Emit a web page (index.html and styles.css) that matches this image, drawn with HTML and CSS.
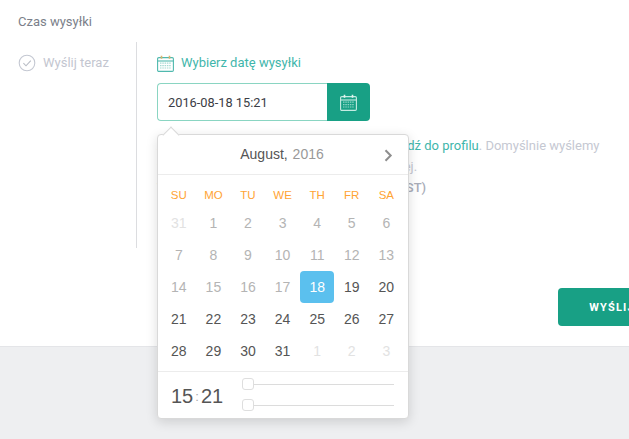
FILE: index.html
```html
<!DOCTYPE html>
<html lang="pl">
<head>
<meta charset="utf-8">
<title>Czas wysyłki</title>
<link rel="stylesheet" href="styles.css">
</head>
<body>
<main class="panel">
  <h2 class="title">Czas wysyłki</h2>
  <div class="columns">
    <div class="now">
      <svg class="check" width="18" height="18" viewBox="0 0 18 18" fill="none"><circle cx="9" cy="9" r="7.8" stroke="#c4c8d2" stroke-width="1.1"/><path d="M5.4 9.2l2.6 2.6 4.8-5.2" stroke="#b9bdc6" stroke-width="1.1"/></svg>
      <span>Wyślij teraz</span>
    </div>
    <div class="schedule">
      <div class="pick">
        <svg class="cal" width="17" height="17" viewBox="0 0 17 17" fill="none"><rect x="0.6" y="2.6" width="15.8" height="13.8" rx="1.2" stroke="#4fb9ae" stroke-width="1.1"/><path d="M0.6 6h15.8" stroke="#4fb9ae" stroke-width="1.1"/><path d="M4.5 .8v3M12.5 .8v3" stroke="#d9b36c" stroke-width="1.6"/><path d="M3 8.2h11M3 10.6h11M3 13h11" stroke="#a5d9d2" stroke-width="1.2" stroke-dasharray="1.5 .8"/></svg>
        <span>Wybierz datę wysyłki</span>
      </div>
      <div class="field">
        <div class="input">2016-08-18 15:21</div>
        <div class="addon">
          <svg width="17" height="17" viewBox="0 0 17 17" fill="none"><rect x="0.6" y="2.6" width="15.8" height="13.8" rx="1.2" stroke="#c5ebe2" stroke-width="1.1"/><path d="M0.6 6h15.8" stroke="#c5ebe2" stroke-width="1.1"/><path d="M4.5 .8v3M12.5 .8v3" stroke="#e2f3ee" stroke-width="1.6"/><path d="M3 8.2h11M3 10.6h11M3 13h11" stroke="#8fd6c6" stroke-width="1.2" stroke-dasharray="1.5 .8"/></svg>
        </div>
      </div>
      <div class="notes">
        <p class="note">Aby zmienić wybraną strefę czasową,&nbsp; <a class="link">przejdź do profilu</a>. Domyślnie wyślemy</p>
        <p class="note">wiadomości według lokalnej strefy czasowej.</p>
        <p class="zone">Twoja strefa czasowa: Kraków (GMT+2, CEST)</p>
      </div>
    </div>
  </div>
  <button class="send">WYŚLIJ</button>
</main>
<footer class="foot"></footer>

<div class="picker">
  <div class="picker-head">
    <span class="month">August,</span> <span class="year">2016</span>
    <svg class="next" width="9" height="13" viewBox="0 0 9 13" fill="none"><path d="M1.5 1.2l5.2 5.3-5.2 5.3" stroke="#8e8e8e" stroke-width="2"/></svg>
  </div>
  <div class="grid days">
    <span>SU</span><span>MO</span><span>TU</span><span>WE</span><span>TH</span><span>FR</span><span>SA</span>
  </div>
  <div class="grid dates">
    <span class="out">31</span><span class="past">1</span><span class="past">2</span><span class="past">3</span><span class="past">4</span><span class="past">5</span><span class="past">6</span>
    <span class="past">7</span><span class="past">8</span><span class="past">9</span><span class="past">10</span><span class="past">11</span><span class="past">12</span><span class="past">13</span>
    <span class="past">14</span><span class="past">15</span><span class="past">16</span><span class="past">17</span><span class="sel">18</span><span>19</span><span>20</span>
    <span>21</span><span>22</span><span>23</span><span>24</span><span>25</span><span>26</span><span>27</span>
    <span>28</span><span>29</span><span>30</span><span>31</span><span class="out">1</span><span class="out">2</span><span class="out">3</span>
  </div>
  <div class="time">
    <div class="clock"><span>15</span><i>:</i><span>21</span></div>
    <div class="sliders">
      <div class="slider"><b></b></div>
      <div class="slider"><b></b></div>
    </div>
  </div>
</div>
</body>
</html>
```
FILE: styles.css
```css
* { box-sizing: border-box; }
html, body { margin: 0; height: 100%; overflow: hidden; }
body { position: relative; background: #eeeff1; font-family: Roboto, sans-serif; display: flex; flex-direction: column; }
.panel { position: relative; height: 347px; flex: none; background: #fff; border-bottom: 1px solid #e4e5e8; padding: 14px 0 0 18px; }
.title { margin: 0 0 12px; font-size: 13px; line-height: 16px; font-weight: 400; color: #7b7f8a; }
.columns { display: flex; }
.now { width: 118px; height: 206px; padding-top: 12px; display: flex; align-items: flex-start; gap: 7px; font-size: 13px; line-height: 18px; color: #c3c6d0; }
.schedule { border-left: 1px solid #dcdde0; width: 470px; height: 206px; padding: 12px 0 0 20px; }
.pick { display: flex; gap: 7px; font-size: 13px; line-height: 18px; color: #3fb6ab; }
.cal { flex: none; margin-top: 1px; }
.check { flex: none; }
.field { display: flex; width: 213px; height: 38px; margin-top: 11px; }
.input { flex: 1; border: 1px solid #8ad5c2; border-right: 0; border-radius: 4px 0 0 4px; padding: 1px 0 0 10px; font-size: 12.8px; line-height: 36px; color: #3b3d45; }
.addon { width: 43px; background: #18a085; border-radius: 0 4px 4px 0; display: flex; align-items: center; justify-content: center; }
.notes { margin-top: 14px; font-size: 13px; line-height: 21px; color: #c5c8d2; white-space: nowrap; }
.notes p { margin: 0; }
.link { color: #3fb6ab; }
.zone { font-weight: 500; color: #a9adb9; }
.send { position: absolute; left: 558px; top: 288px; width: 108px; height: 38px; border: 0; border-radius: 4px; background: #18a085; color: #fff; font-family: Roboto, sans-serif; font-size: 11px; font-weight: 700; letter-spacing: 1.2px; padding: 0; }
.foot { flex: 1; }

.picker { position: absolute; left: 157px; top: 134px; width: 252px; height: 285px; background: #fff; border: 1px solid #d9d9d9; border-radius: 4px; box-shadow: 0 3px 12px rgba(0,0,0,.14); font-family: "Liberation Sans", Arial, sans-serif; color: #555; }
.picker::before { content: ""; position: absolute; left: 7px; top: -6px; width: 11px; height: 11px; background: #fff; border: 1px solid #d9d9d9; border-width: 1px 0 0 1px; transform: rotate(45deg); }
.picker-head { position: relative; height: 40px; border-bottom: 1px solid #ececec; padding-right: 2px; text-align: center; font-size: 14px; line-height: 38px; }
.year { color: #999; margin-left: 1px; }
.next { position: absolute; right: 15px; top: 14px; }
.grid { display: grid; grid-template-columns: repeat(7, 34.6px); padding-left: 3.5px; text-align: center; }
.days { height: 32px; padding-top: 13px; font-size: 11.5px; line-height: 14px; color: #ffa434; }
.dates { height: 164px; grid-auto-rows: 32px; font-size: 14px; line-height: 32px; }
.dates .past { color: #b4b4b4; }
.dates .out { color: #e2e2e2; }
.dates .sel { background: #5bc0ee; color: #fff; border-radius: 4px; }
.time { display: flex; border-top: 1px solid #ececec; height: 47px; }
.clock { width: 83.5px; padding-left: 13px; font-size: 20px; line-height: 48px; white-space: nowrap; }
.clock i { font-style: normal; font-size: 13px; color: #aaa; margin: 0 2px; position: relative; top: -2px; }
.sliders { width: 152.5px; padding-top: 6px; }
.slider { position: relative; height: 21px; }
.slider::before { content: ""; position: absolute; left: 0; right: 0; top: 6px; height: 1px; background: #dcdcdc; }
.slider b { position: absolute; left: 0; top: 0; width: 12px; height: 12px; background: #fff; border: 1px solid #dedede; border-radius: 3px; }
```
